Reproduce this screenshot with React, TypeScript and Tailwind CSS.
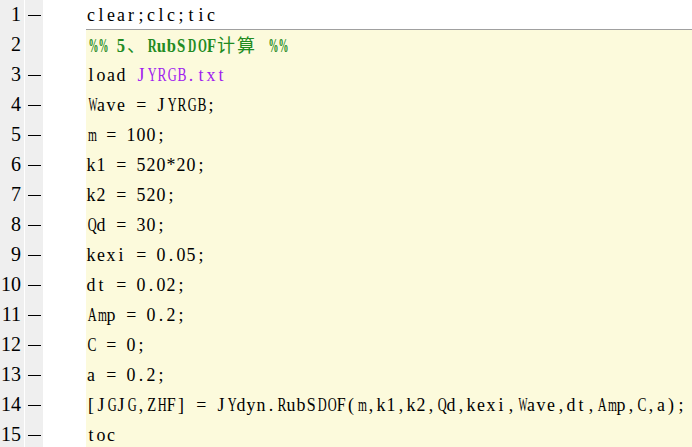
type Seg = { t: string; c?: string };

const lines: { n: number; dash: boolean; segs: Seg[] }[] = [
  { n: 1, dash: true, segs: [{ t: 'clear;clc;tic' }] },
  { n: 2, dash: false, segs: [{ t: '%% 5、RubSDOF计算 %%', c: 'font-bold text-[#228b22]' }] },
  { n: 3, dash: true, segs: [{ t: 'load ' }, { t: 'JYRGB.txt', c: 'text-[#a020f0]' }] },
  { n: 4, dash: true, segs: [{ t: 'Wave = JYRGB;' }] },
  { n: 5, dash: true, segs: [{ t: 'm = 100;' }] },
  { n: 6, dash: true, segs: [{ t: 'k1 = 520*20;' }] },
  { n: 7, dash: true, segs: [{ t: 'k2 = 520;' }] },
  { n: 8, dash: true, segs: [{ t: 'Qd = 30;' }] },
  { n: 9, dash: true, segs: [{ t: 'kexi = 0.05;' }] },
  { n: 10, dash: true, segs: [{ t: 'dt = 0.02;' }] },
  { n: 11, dash: true, segs: [{ t: 'Amp = 0.2;' }] },
  { n: 12, dash: true, segs: [{ t: 'C = 0;' }] },
  { n: 13, dash: true, segs: [{ t: 'a = 0.2;' }] },
  { n: 14, dash: true, segs: [{ t: '[JGJG,ZHF] = JYdyn.RubSDOF(m,k1,k2,Qd,kexi,Wave,dt,Amp,C,a);' }] },
  { n: 15, dash: true, segs: [{ t: 'toc' }] },
];

// rough Times advance widths (em) for glyphs wider than a half-width cell
const wide: Record<string, number> = {
  W: 0.944, M: 0.889, m: 0.778, w: 0.722, '%': 0.833,
  A: 0.722, D: 0.722, G: 0.722, H: 0.722, O: 0.722, Q: 0.722, Y: 0.722,
  B: 0.667, C: 0.667, R: 0.667, Z: 0.611, S: 0.556, F: 0.556, '*': 0.5,
};

// SimSun-like fixed cells: half-width 10px, full-width 20px
function Cells({ seg }: { seg: Seg }) {
  const bold = seg.c?.includes('font-bold');
  return (
    <span className={seg.c}>
      {Array.from(seg.t).map((ch, i) => {
        if (ch.charCodeAt(0) > 0x2000) {
          return (
            <span
              key={i}
              className="inline-block w-[20px] text-center text-[18px] font-normal [font-family:'Noto_Sans_CJK_SC',sans-serif]"
            >
              {ch}
            </span>
          );
        }
        const adv = (wide[ch] ?? 0.5) * (bold ? 1.08 : 1);
        const sx = Math.min(1, 0.47 / adv);
        return (
          <span
            key={i}
            className="inline-block w-[10px] text-center whitespace-pre"
            style={sx < 1 ? { transform: `scaleX(${sx.toFixed(3)})` } : undefined}
          >
            {ch}
          </span>
        );
      })}
    </span>
  );
}

export default function App() {
  return (
    <div className="w-[692px] h-[447px] overflow-hidden bg-white">
      {lines.map((line) => (
        <div key={line.n} className="flex h-[30px]">
          <div className="w-[24px] bg-[#efefef] text-right pr-[3px] text-[20px] leading-[29px] text-black [font-family:'Liberation_Serif',serif]">
            {line.n}
          </div>
          <div className="w-px bg-white" />
          <div className="w-[18px] bg-[#efefef] flex items-center">
            {line.dash && <div className="ml-[3px] w-[13px] h-px bg-black" />}
          </div>
          <div className="w-[43px] bg-white" />
          <div
            className={`flex-1 whitespace-pre text-[19px] leading-[29px] text-black [font-family:'Liberation_Serif',serif] ${
              line.n === 1 ? 'bg-white border-b border-[#a0a0a0]' : 'bg-[#fcfadc]'
            }`}
          >
            {line.segs.map((s, i) => (
              <Cells key={i} seg={s} />
            ))}
          </div>
        </div>
      ))}
    </div>
  );
}
